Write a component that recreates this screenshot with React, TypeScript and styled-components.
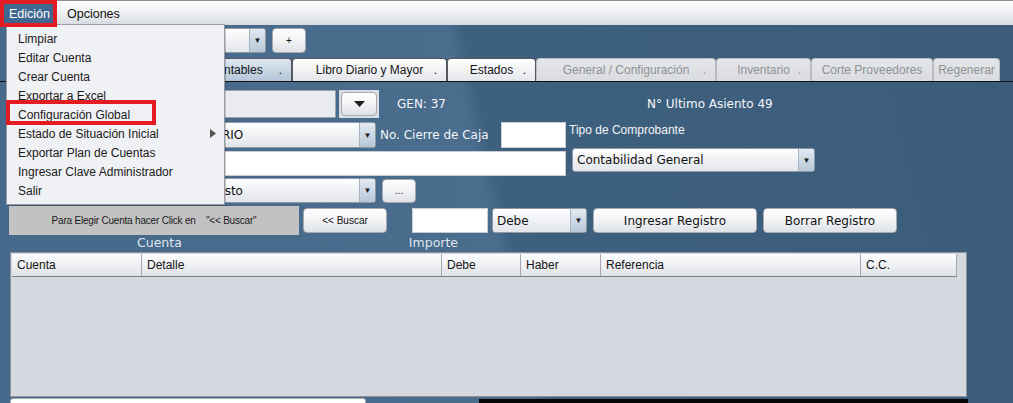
import React from 'react';
import styled, { createGlobalStyle } from 'styled-components';

const SANS = `"Liberation Sans", Arial, sans-serif`;
const COMIC = `"Comic Sans MS", "DejaVu Sans", sans-serif`;

const GlobalStyle = createGlobalStyle`
  html, body {
    margin: 0;
    padding: 0;
    background: #3b5c7b;
    overflow: hidden;
  }
  #root {
    width: 1013px;
    height: 403px;
  }
`;

const Screen = styled.div`
  position: relative;
  width: 1013px;
  height: 403px;
  overflow: hidden;
  font-family: ${SANS};
  background: linear-gradient(77deg, #46688a 0px, #4a6c8d 520px, #3e607f 536px, #3b5c7b 1078px);
`;

const MenuBar = styled.div`
  height: 25px;
  box-sizing: border-box;
  border-top: 1px solid #8a8c90;
  background: linear-gradient(#fdfdfe, #f3f4f6 40%, #d6dae0);
  display: flex;
  align-items: stretch;
  padding: 2px 0 0 4px;
`;

const MenuTitle = styled.div<{ $open?: boolean }>`
  display: flex;
  align-items: center;
  padding: 0 5px;
  margin-right: 7px;
  font-size: 12.5px;
  color: ${p => (p.$open ? '#fff' : '#111')};
  background: ${p => (p.$open ? '#3f6891' : 'transparent')};
`;

const Content = styled.div`
  display: flex;
  flex-direction: column;
  padding-left: 10px;
`;

const Row = styled.div<{ $mt: number; $h: number; $w?: number }>`
  display: flex;
  align-items: center;
  margin-top: ${p => p.$mt}px;
  height: ${p => p.$h}px;
  width: ${p => (p.$w ? `${p.$w}px` : 'auto')};
`;

const Combo = styled.div<{ $w: number; $h: number; $ml?: number; $mt?: number }>`
  width: ${p => p.$w}px;
  height: ${p => p.$h}px;
  margin-left: ${p => p.$ml ?? 0}px;
  margin-top: ${p => p.$mt ?? 0}px;
  box-sizing: border-box;
  display: flex;
  border: 1px solid #8f9aa7;
  border-radius: 3px;
  background: linear-gradient(#ffffff, #f0f1f4 50%, #e2e5ea);
  overflow: hidden;
  flex-shrink: 0;
`;

const ComboText = styled.div`
  flex: 1;
  display: flex;
  align-items: center;
  padding-left: 4px;
  font: 12px ${COMIC};
  color: #111;
  white-space: nowrap;
  overflow: hidden;
`;

const ComboArrow = styled.div`
  width: 15px;
  display: flex;
  align-items: center;
  justify-content: center;
  border-left: 1px solid #a6b3c2;
  background: linear-gradient(#e2e9f1, #b7c7d8);
  font-size: 8px;
  color: #222;
`;

const Button = styled.div<{ $w: number; $h: number; $small?: boolean; $ml?: number }>`
  width: ${p => p.$w}px;
  height: ${p => p.$h}px;
  margin-left: ${p => p.$ml ?? 0}px;
  box-sizing: border-box;
  border: 1px solid #a7abb1;
  border-radius: 4px;
  background: linear-gradient(#ffffff, #f3f4f6 45%, #dfe2e6);
  font: ${p => (p.$small ? `10px ${SANS}` : `12px ${COMIC}`)};
  color: #111;
  display: flex;
  align-items: center;
  justify-content: center;
  flex-shrink: 0;
`;

const TextField = styled.div<{ $w: number; $h: number; $ml?: number; $gray?: boolean }>`
  width: ${p => p.$w}px;
  height: ${p => p.$h}px;
  margin-left: ${p => p.$ml ?? 0}px;
  box-sizing: border-box;
  background: ${p => (p.$gray ? '#e9ebee' : '#fff')};
  border: 1px solid ${p => (p.$gray ? '#9aa2ac' : '#c9cdd3')};
  flex-shrink: 0;
`;

const TabStrip = styled.div`
  display: flex;
  align-items: flex-end;
  height: 24px;
  margin: 5px 0 0 -10px;
  padding-left: 10px;
  box-sizing: border-box;
  border-bottom: 1px solid #111;
`;

type TabState = 'active' | 'normal' | 'disabled';

const Tab = styled.div<{ $w: number; $state: TabState }>`
  width: ${p => p.$w}px;
  height: 23px;
  box-sizing: border-box;
  display: grid;
  grid-template-columns: 1fr auto 1fr;
  align-items: center;
  border: 1px solid ${p => (p.$state === 'disabled' ? '#b9bdc3' : '#55595f')};
  border-bottom: none;
  border-radius: 4px 4px 0 0;
  font-size: 12px;
  color: ${p => (p.$state === 'disabled' ? '#8e9196' : '#151515')};
  background: ${p =>
    p.$state === 'active'
      ? 'linear-gradient(#dde7f1, #b3c6d8)'
      : p.$state === 'disabled'
      ? 'linear-gradient(#e4e6e9, #d9dbde)'
      : 'linear-gradient(#ffffff, #f1f2f4 50%, #e4e6ea)'};
  white-space: nowrap;
`;

const TabLabel = styled.span`
  grid-column: 2;
`;

const TabDot = styled.span`
  grid-column: 3;
  justify-self: end;
  padding-right: 9px;
`;

const DropWell = styled.div`
  margin-left: 3px;
  width: 40px;
  height: 28px;
  box-sizing: border-box;
  padding: 2px;
  background: #d9dee4;
  display: flex;
  justify-content: center;
`;

const InfoText = styled.div<{ $w?: number; $ml?: number }>`
  width: ${p => (p.$w ? `${p.$w}px` : 'auto')};
  margin-left: ${p => p.$ml ?? 0}px;
  font: 12px ${COMIC};
  color: #f4f6f9;
  white-space: nowrap;
`;

const FormBlock = styled.div`
  display: flex;
  margin-top: 4px;
`;

const Stack = styled.div<{ $ml?: number }>`
  display: flex;
  flex-direction: column;
  margin-left: ${p => p.$ml ?? 0}px;
`;

const SmallLabel = styled.div`
  height: 18px;
  padding-top: 1px;
  box-sizing: border-box;
  font-size: 12px;
  color: #f2f4f7;
  white-space: nowrap;
`;

const HintBox = styled.div`
  margin-left: -1px;
  width: 290px;
  height: 29px;
  background: #c2c2c2;
  display: flex;
  align-items: center;
  justify-content: center;
  font-size: 10px;
  letter-spacing: -0.2px;
  color: #1a1a1a;
  white-space: pre;
  flex-shrink: 0;
`;

const ColumnCaption = styled.div<{ $ml: number }>`
  margin-left: ${p => p.$ml}px;
  font: 12.5px ${COMIC};
  color: #dfe6ee;
  white-space: nowrap;
`;

const TablePanel = styled.div`
  margin-top: 2px;
  width: 957px;
  height: 145px;
  box-sizing: border-box;
  border: 1px solid #8c939c;
  background: #d5d8df;
  padding: 1px;
`;

const HeaderRow = styled.div`
  display: flex;
  width: 945px;
  height: 23px;
  box-sizing: border-box;
  background: linear-gradient(#fcfcfd, #eceef1 60%, #dfe2e6);
  border-bottom: 1px solid #7c8088;
`;

const HeaderCell = styled.div<{ $w: number }>`
  width: ${p => p.$w}px;
  box-sizing: border-box;
  border-right: 1px solid #a4a8ae;
  padding-left: 5px;
  display: flex;
  align-items: center;
  font-size: 12px;
  color: #151515;
`;

const BottomRow = styled.div`
  display: flex;
  align-items: flex-start;
`;

const BottomField = styled.div`
  margin-top: 1px;
  width: 356px;
  height: 8px;
  background: #fff;
  border: 1px solid #a9aeb5;
  border-radius: 3px 3px 0 0;
  box-sizing: border-box;
`;

const BottomBar = styled.div`
  margin: 2px 0 0 113px;
  width: 489px;
  height: 6px;
  background: #050505;
`;

const DropMenu = styled.div`
  position: absolute;
  left: 6px;
  top: 24px;
  width: 219px;
  box-sizing: border-box;
  padding: 4px 0;
  background: #f0f1f4;
  border: 1px solid #9a9ea4;
  box-shadow: 1px 1px 0 rgba(0, 0, 0, 0.18);
`;

const MenuItem = styled.div`
  height: 19px;
  display: flex;
  align-items: center;
  padding: 0 8px 0 11px;
  font-size: 12px;
  color: #1a1a1a;
  white-space: nowrap;
`;

const SubArrow = styled.svg`
  margin-left: auto;
`;

const Annotation = styled.div<{ $x: number; $y: number; $w: number; $h: number }>`
  position: absolute;
  left: ${p => p.$x}px;
  top: ${p => p.$y}px;
  width: ${p => p.$w}px;
  height: ${p => p.$h}px;
  box-sizing: border-box;
  border: 4px solid #e31b23;
  pointer-events: none;
`;

// first tab sits fully behind the open menu, so it carries no label
const tabs: { label: string; w: number; state: TabState; dot: boolean }[] = [
  { label: '', w: 120, state: 'normal', dot: false },
  { label: 'Asientos Contables', w: 162, state: 'active', dot: true },
  { label: 'Libro Diario y Mayor', w: 155, state: 'normal', dot: true },
  { label: 'Estados', w: 89, state: 'normal', dot: true },
  { label: 'General / Configuración', w: 180, state: 'disabled', dot: true },
  { label: 'Inventario', w: 95, state: 'disabled', dot: true },
  { label: 'Corte Proveedores', w: 122, state: 'disabled', dot: false },
  { label: 'Regenerar', w: 67, state: 'disabled', dot: false },
];

const columns = [
  { label: 'Cuenta', w: 130 },
  { label: 'Detalle', w: 300 },
  { label: 'Debe', w: 79 },
  { label: 'Haber', w: 80 },
  { label: 'Referencia', w: 260 },
  { label: 'C.C.', w: 96 },
];

const menuItems = [
  'Limpiar',
  'Editar Cuenta',
  'Crear Cuenta',
  'Exportar a Excel',
  'Configuración Global',
  'Estado de Situación Inicial',
  'Exportar Plan de Cuentas',
  'Ingresar Clave Administrador',
  'Salir',
];

const Arrow = () => <ComboArrow>▼</ComboArrow>;

const App: React.FC = () => {
  return (
    <>
      <GlobalStyle />
      <Screen>
        <MenuBar>
          <MenuTitle $open>Edición</MenuTitle>
          <MenuTitle>Opciones</MenuTitle>
        </MenuBar>

        <Content>
          <Row $mt={3} $h={25}>
            <Combo $w={256} $h={25}>
              <ComboText />
              <Arrow />
            </Combo>
            <Button $w={34} $h={25} $ml={6} $small>
              +
            </Button>
          </Row>

          <TabStrip>
            {tabs.map((t, i) => (
              <Tab key={i} $w={t.w} $state={t.state}>
                {t.label && <TabLabel>{t.label}</TabLabel>}
                {t.dot && <TabDot>.</TabDot>}
              </Tab>
            ))}
          </TabStrip>

          <Row $mt={8} $h={28}>
            <TextField $w={326} $h={28} $gray />
            <DropWell>
              <Button $w={36} $h={24}>
                <svg width="11" height="6" viewBox="0 0 11 6">
                  <polygon points="0,0 11,0 5.5,6" fill="#1e1e1e" />
                </svg>
              </Button>
            </DropWell>
            <InfoText $w={250} $ml={18}>
              GEN: 37
            </InfoText>
            <InfoText>N° Ultimo Asiento 49</InfoText>
          </Row>

          <FormBlock>
            <Stack>
              <Row $mt={0} $h={26} $w={556}>
                <Combo $w={180} $h={26} $ml={186}>
                  <ComboText>DIARIO</ComboText>
                  <Arrow />
                </Combo>
                <InfoText $ml={4}>No. Cierre de Caja</InfoText>
                <TextField $w={65} $h={26} style={{ marginLeft: 'auto' }} />
              </Row>
              <Row $mt={3} $h={25}>
                <TextField $w={374} $h={25} $ml={182} />
              </Row>
            </Stack>
            <Stack $ml={3}>
              <SmallLabel>Tipo de Comprobante</SmallLabel>
              <Combo $w={243} $h={24} $ml={3} $mt={8}>
                <ComboText>Contabilidad General</ComboText>
                <Arrow />
              </Combo>
            </Stack>
          </FormBlock>

          <Row $mt={2} $h={25}>
            <Combo $w={173} $h={25} $ml={193}>
              <ComboText>Gasto</ComboText>
              <Arrow />
            </Combo>
            <Button $w={34} $h={24} $ml={6} $small>
              ...
            </Button>
          </Row>

          <Row $mt={3} $h={29}>
            <HintBox>{'Para Elegir Cuenta hacer Click en    "<< Buscar"'}</HintBox>
            <Button $w={84} $h={25} $ml={4} $small>
              {'<< Buscar'}
            </Button>
            <TextField $w={76} $h={25} $ml={25} />
            <Combo $w={95} $h={25} $ml={4}>
              <ComboText>Debe</ComboText>
              <Arrow />
            </Combo>
            <Button $w={164} $h={25} $ml={6}>
              Ingresar Registro
            </Button>
            <Button $w={134} $h={25} $ml={6}>
              Borrar Registro
            </Button>
          </Row>

          <Row $mt={0} $h={15}>
            <ColumnCaption $ml={127}>Cuenta</ColumnCaption>
            <ColumnCaption $ml={227}>Importe</ColumnCaption>
          </Row>

          <TablePanel>
            <HeaderRow>
              {columns.map(c => (
                <HeaderCell key={c.label} $w={c.w}>
                  {c.label}
                </HeaderCell>
              ))}
            </HeaderRow>
          </TablePanel>

          <BottomRow>
            <BottomField />
            <BottomBar />
          </BottomRow>
        </Content>

        <DropMenu>
          {menuItems.map(item => (
            <MenuItem key={item}>
              {item}
              {item === 'Estado de Situación Inicial' && (
                <SubArrow width="6" height="9" viewBox="0 0 6 9">
                  <polygon points="0,0 6,4.5 0,9" fill="#555" />
                </SubArrow>
              )}
            </MenuItem>
          ))}
        </DropMenu>

        <Annotation $x={0} $y={0} $w={57} $h={27} />
        <Annotation $x={6} $y={100} $w={150} $h={25} />
      </Screen>
    </>
  );
};

export default App;
